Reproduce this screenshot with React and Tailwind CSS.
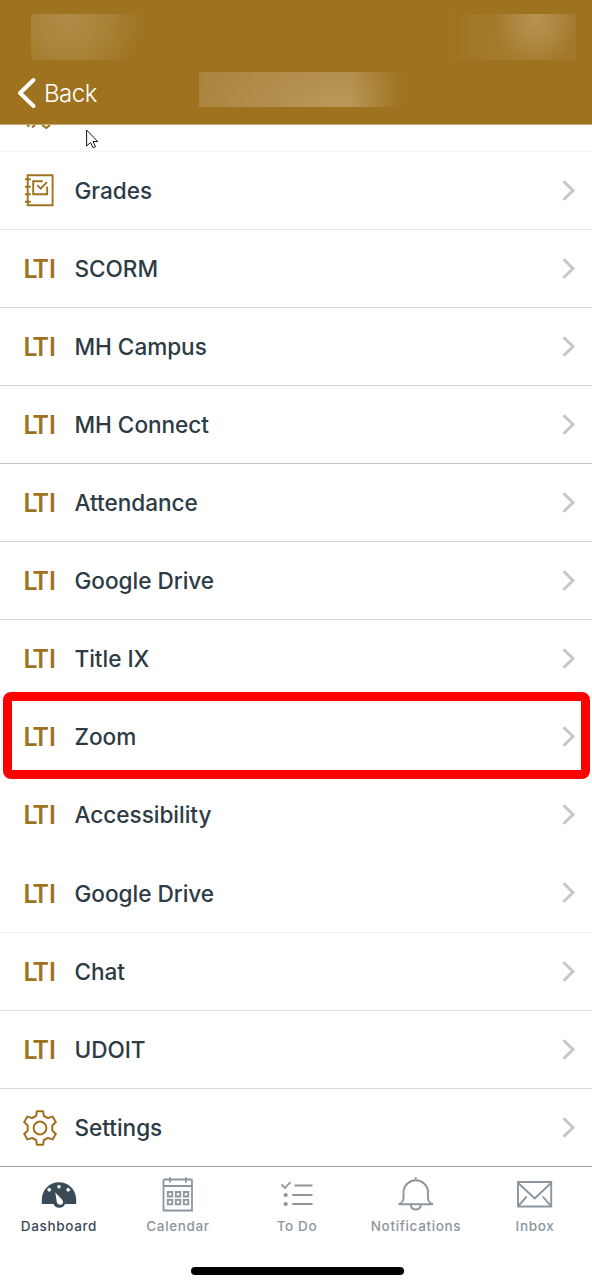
import clsx from 'clsx';

const rows = [
    { label: 'Grades', icon: 'grades', line: 'border-[#e6e6e6]' },
    { label: 'SCORM', line: 'border-[#dcdcdc]' },
    { label: 'MH Campus', line: 'border-[#d0d0d0]' },
    { label: 'MH Connect', line: 'border-[#c6c6c6]' },
    { label: 'Attendance', line: 'border-[#d0d0d0]' },
    { label: 'Google Drive', line: 'border-[#dcdcdc]' },
    { label: 'Title IX', line: 'border-[#e9e9e9]' },
    { label: 'Zoom', line: 'border-transparent', highlighted: true },
    { label: 'Accessibility', line: 'border-transparent' },
    { label: 'Google Drive', line: 'border-[#efefef]', tall: true },
    { label: 'Chat', line: 'border-[#e2e2e2]' },
    { label: 'UDOIT', line: 'border-[#d6d6d6]' },
    { label: 'Settings', icon: 'settings', line: 'border-[#999b9c]' },
];

const GradesIcon = () => (
    <svg width="30" height="34" viewBox="0 0 30 34" fill="none" stroke="currentColor" strokeWidth="1.9">
        <path d="M3.7 1.2H28.6V31.2H3.7z" />
        <path d="M1 5.3H6.8M1 12.7H6.8M1 20.3H6.8M1 27.8H6.8" />
        <path d="M18.7 7.2H9.2V20.2H23.2V12.5" />
        <path d="M13.2 11.2L16.7 14.7L23 8.2" />
    </svg>
);

const SettingsIcon = () => (
    <svg width="34" height="36" viewBox="0 0 34 36" fill="none" stroke="currentColor" strokeWidth="2" strokeLinejoin="round">
        <path d="M14 1.2H20L21 6L24.8 8L29.6 6.6L32.8 12L29.3 15.5V20.5L32.8 24L29.6 29.4L24.8 28L21 30L20 34.8H14L13 30L9.2 28L4.4 29.4L1.2 24L4.7 20.5V15.5L1.2 12L4.4 6.6L9.2 8L13 6z" />
        <circle cx="17" cy="18" r="6.4" />
    </svg>
);

const LtiIcon = () => (
    <span className="flex pt-[2px] text-[25px] leading-none font-semibold">
        <span className="-ml-[0.5px] tracking-[-5.2px]">L</span>
        <span>TI</span>
    </span>
);

const Chevron = () => (
    <svg width="14" height="22" viewBox="0 0 14 22" fill="none" stroke="#c6c6ca" strokeWidth="3">
        <path d="M1.5 1.2L11 10.5L1.5 19.8" />
    </svg>
);

const Row = ({ label, icon, line, highlighted, tall }) => (
    <li className={clsx('relative flex items-center border-b pr-[16px]', line, tall ? 'h-[79px]' : 'h-[78px]')}>
        <div className="flex w-[74.5px] shrink-0 pl-[24px] text-[#9e721e]">
            {icon === 'grades' && <GradesIcon />}
            {icon === 'settings' && <div className="-ml-[1.5px]"><SettingsIcon /></div>}
            {!icon && <LtiIcon />}
        </div>
        <span className="grow pt-px text-[22.6px] font-[530] tracking-[-0.04px] text-[#2d3b45]">{label}</span>
        <Chevron />
        {highlighted && (
            <div className="absolute -top-[6px] left-[3px] h-[87px] w-[587px] rounded-lg border-[9px] border-[#ff0000]" />
        )}
    </li>
);

const DashboardIcon = () => (
    <svg width="36" height="36" viewBox="0 0 36 36">
        <path d="M.8 27V22.5A17.2 17.2 0 0 1 35.2 22.5V27H24A6 5.2 0 0 1 12.5 27z" fill="currentColor" />
        <g fill="#fff">
            <path d="M16.5 8.3h3v3h-3zM8.2 10.4l2.3 2.3l-2.3 2.3l-2.3-2.3zM27.2 10.4l2.3 2.3l-2.3 2.3l-2.3-2.3z" />
            <path d="M14.3 15.5L21.2 22.8C23 25.2 21.8 27.8 19.3 27.8C17.2 27.8 16 26.5 15.7 24.5z" />
        </g>
    </svg>
);

const CalendarIcon = () => (
    <svg width="36" height="36" viewBox="0 0 36 36" fill="none" stroke="currentColor" strokeWidth="1.8">
        <path d="M3.5 33.5V3.5Q3.5 2.5 4.5 2.5H31Q32 2.5 32 3.5V33.5zM3.5 9H32M10 .2V5.5M26 .2V5.5" />
        <path d="M7.8 15h4.5v4.5h-4.5zM15.8 15h4.5v4.5h-4.5zM23.8 15h4.5v4.5h-4.5zM7.8 22.8h4.5v4.5h-4.5zM15.8 22.8h4.5v4.5h-4.5zM23.8 22.8h4.5v4.5h-4.5z" />
    </svg>
);

const TodoIcon = () => (
    <svg width="36" height="36" viewBox="0 0 36 36" fill="none" stroke="currentColor" strokeWidth="1.8">
        <path d="M2.5 7.5L6 11L11.5 5M15.5 8.5H33.5M13.2 18H33.5M13.2 27H33.5" />
        <circle cx="6.7" cy="18" r="2.1" fill="currentColor" stroke="none" />
        <circle cx="6.7" cy="27" r="2.1" fill="currentColor" stroke="none" />
    </svg>
);

const BellIcon = () => (
    <svg width="36" height="36" viewBox="0 0 36 36" fill="none" stroke="currentColor" strokeWidth="1.9">
        <path d="M.5 27.3C4 26.3 5.5 24.8 5.5 20.3V14.5A12.3 12.3 0 0 1 30 14.5V20.3C30 24.8 31.5 26.3 35 27.3z" />
        <path d="M17.7 .2V2.5M12.7 28A5.2 5.6 0 0 0 22.9 28" />
    </svg>
);

const InboxIcon = () => (
    <svg width="36" height="36" viewBox="0 0 36 36" fill="none" stroke="currentColor" strokeWidth="1.9">
        <path d="M1 5H34.2V29.5H1zM1.2 6L17.7 21.5L34 6M1.2 29.2L9.7 19.5M34 29.2L25.7 19.5" />
    </svg>
);

const tabs = [
    { label: 'Dashboard', Icon: DashboardIcon, active: true },
    { label: 'Calendar', Icon: CalendarIcon },
    { label: 'To Do', Icon: TodoIcon },
    { label: 'Notifications', Icon: BellIcon },
    { label: 'Inbox', Icon: InboxIcon },
];

const Cursor = () => (
    <svg className="absolute left-[86px] top-[4px]" width="13" height="20" viewBox="0 0 13 20" fill="#fff" stroke="#11111b" strokeWidth="1">
        <path d="M.6 1V17L4.5 13.5L7.2 18.8L9.5 17.7L7 12.5H11.7z" />
    </svg>
);

const App = () => (
    <div className="flex h-[1282px] w-[592px] flex-col overflow-hidden bg-white font-['Inter',sans-serif]">
        <header className="h-[125px] shrink-0 border-b border-[#c6a873] bg-[#9e721e]">
            <div className="flex justify-between pl-[31px] pr-[16px] pt-[14px]">
                <div className="h-[46px] w-[114px] bg-[radial-gradient(ellipse_75px_75px_at_38px_5px,#b08b47,#a98339_50%,#9e721e)]" />
                <div className="h-[46px] w-[137px] bg-[radial-gradient(ellipse_42px_48px_at_97px_6px,#b8944f,#b08a46_38%,transparent),linear-gradient(90deg,#9e721e,#a57b2c_50%,#a2772a)]" />
            </div>
            <div className="flex pt-[12px]">
                <div className="flex h-[42px] w-[199px] items-center pl-[17px] text-white">
                    <svg width="20" height="32" viewBox="0 0 20 32" fill="none" stroke="currentColor" strokeWidth="4" strokeLinecap="round" strokeLinejoin="round">
                        <path d="M16.5 3L3 16L16.5 29" />
                    </svg>
                    <span className="ml-[7px] pt-px text-[24px] font-[350] tracking-[-0.5px]">Back</span>
                </div>
                <div className="h-[35px] w-[210px] bg-[linear-gradient(90deg,transparent_72%,#9e721e_98%),radial-gradient(ellipse_170px_75px_at_145px_35px,#ba9859,transparent),linear-gradient(90deg,#a9823b,#ae8741)]" />
            </div>
        </header>
        <div className="relative h-[27px] shrink-0 border-b border-[#f5f5f5]">
            <svg className="ml-[26px] text-[#9e721e]" width="26" height="5" viewBox="0 0 26 5" fill="none" stroke="currentColor" strokeWidth="2">
                <path d="M1 0L3.5 1.5M9 0L6 2.5M16 0L20.3 3L24 0" />
            </svg>
            <Cursor />
        </div>
        <ul className="shrink-0">
            {rows.map((row, i) => <Row key={i} {...row} />)}
        </ul>
        <nav className="grid h-[100px] w-[595px] shrink-0 grid-cols-5 pt-[10px]">
            {tabs.map(({ label, Icon, active }) => (
                <div key={label} className={clsx('flex flex-col items-center pr-px', active ? 'text-[#394b58]' : 'text-[#8b969e]')}>
                    <Icon />
                    <span className="mt-[3px] text-[13.5px] leading-[20px] font-[460] tracking-[0.65px]">{label}</span>
                </div>
            ))}
        </nav>
        <div className="ml-[190.5px] h-2 w-[213px] shrink-0 rounded-full bg-black" />
    </div>
);

export default App;
